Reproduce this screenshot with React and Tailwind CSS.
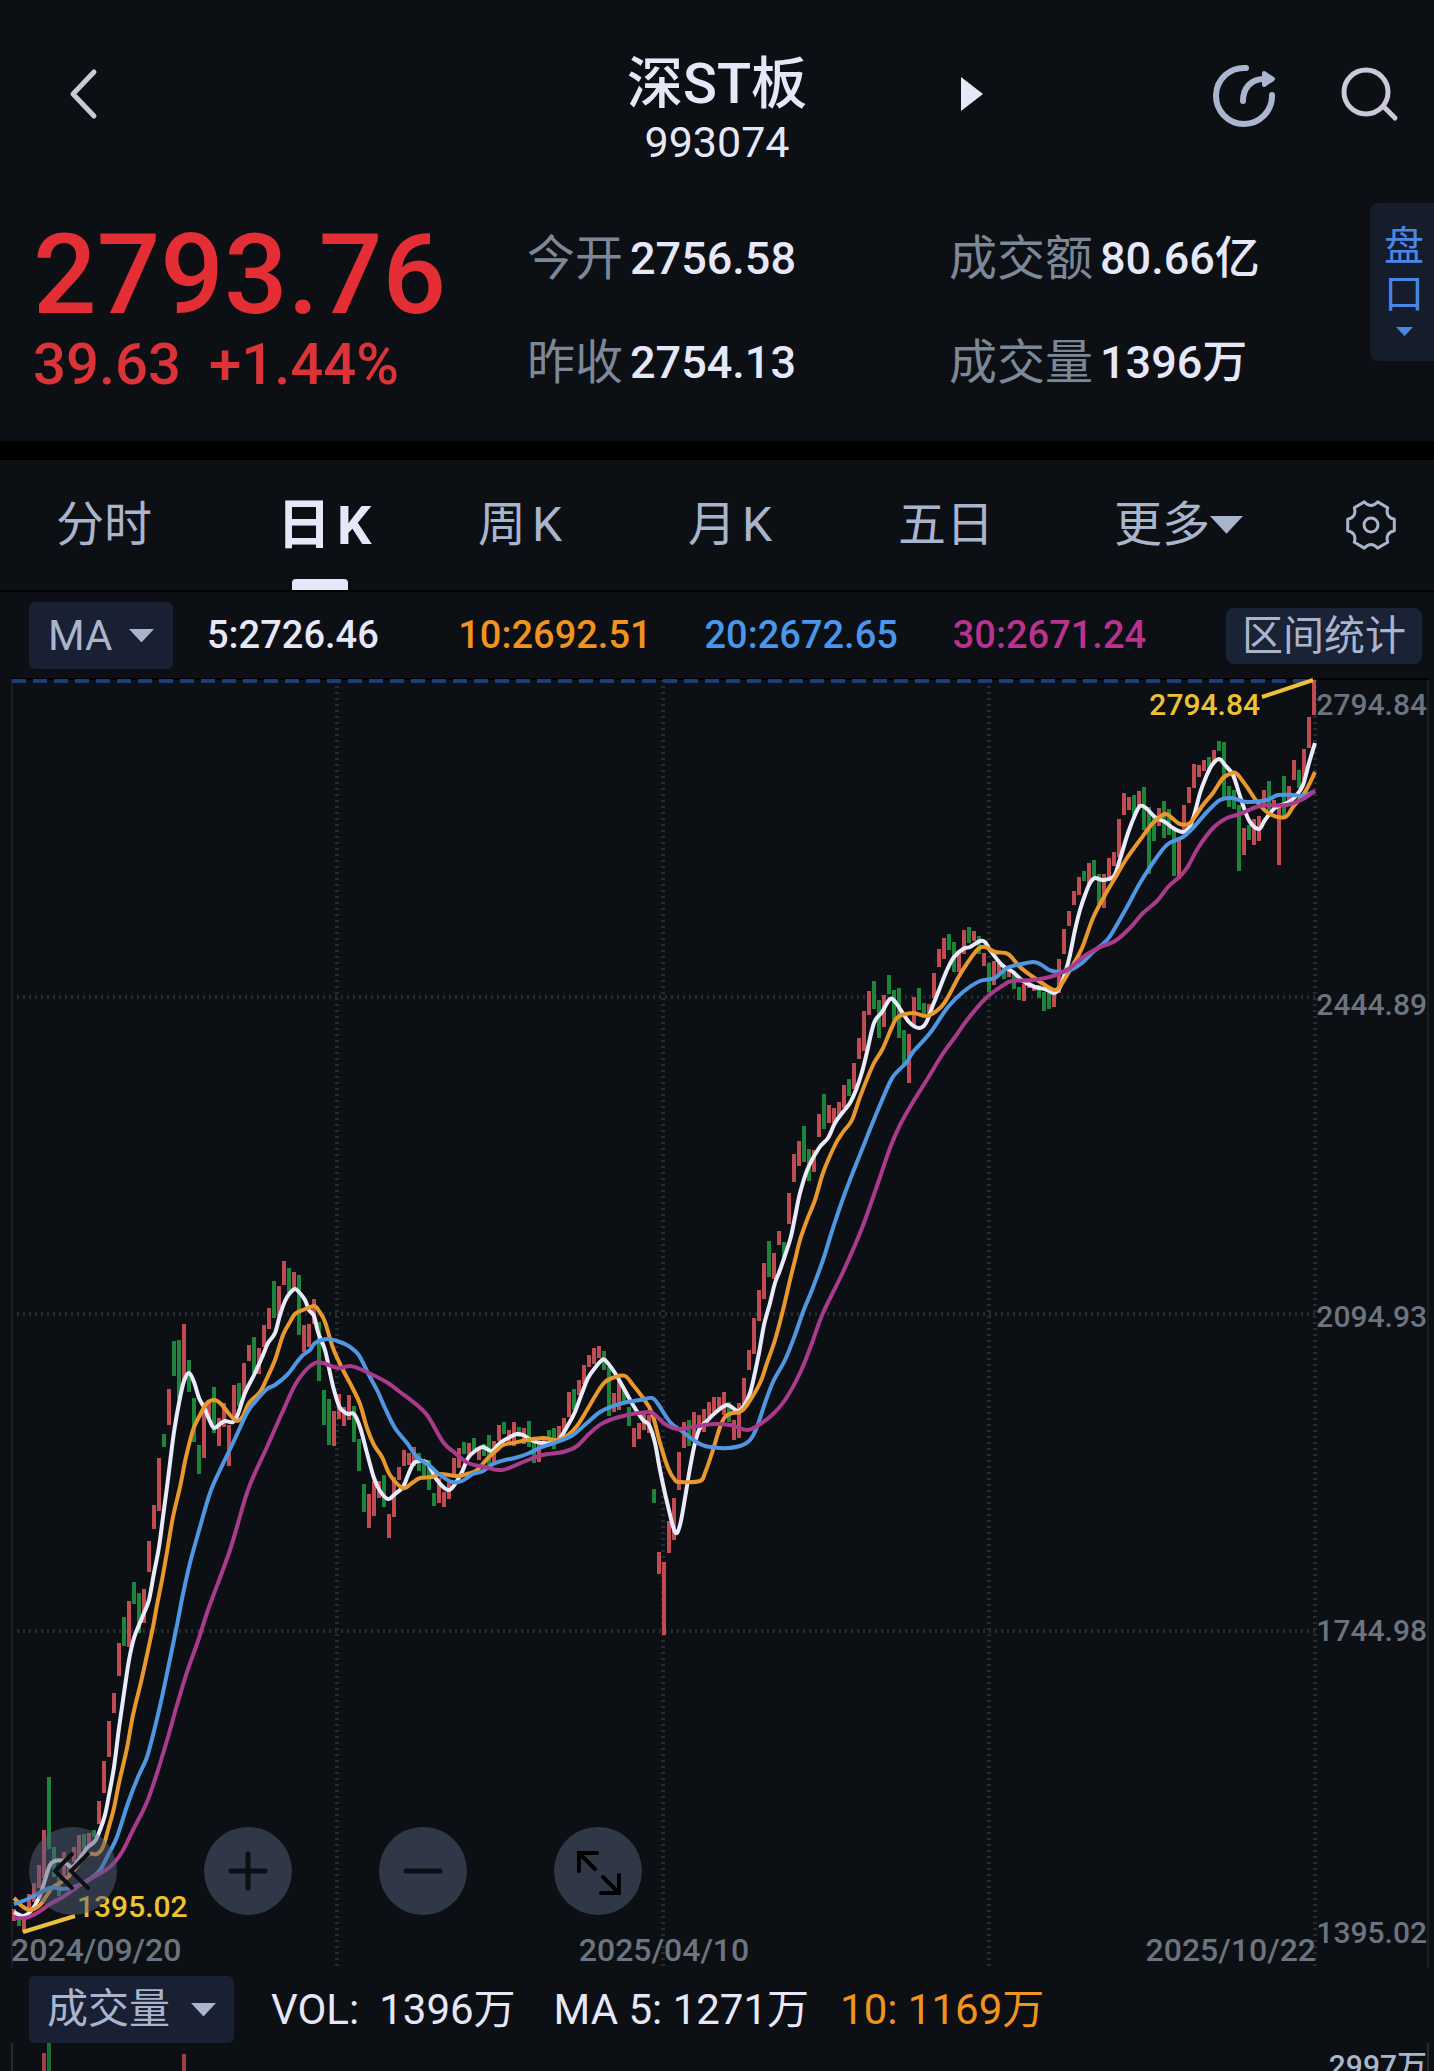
import React, { useState } from 'react';

// One candle per entry: r/g, high and low in chart units
const CANDLES = `
r1909-1921 g1919-1926 r1915-1932 r1894-1908 r1883-1902 r1865-1888 r1830-1878 g1777-1849 g1847-1877 g1877-1896
r1852-1879 r1863-1878 r1847-1862 r1835-1860 g1834-1849 r1833-1846 g1830-1837 r1801-1824 r1761-1793 r1721-1757
r1693-1713 r1643-1676 g1617-1646 r1601-1647 g1582-1604 g1593-1633 r1589-1623 r1541-1572 r1505-1529 r1458-1511
g1434-1447 r1389-1425 g1341-1376 g1340-1399 r1324-1380 g1360-1392 g1398-1442 g1445-1474 r1407-1458 r1400-1420
g1387-1433 r1418-1446 r1403-1427 r1425-1466 r1385-1418 g1383-1406 r1363-1396 r1345-1361 g1337-1373 r1348-1374
r1325-1347 r1308-1329 g1281-1318 r1286-1317 r1261-1285 g1268-1293 r1272-1290 g1275-1335 r1325-1352 r1324-1347
r1299-1324 g1322-1381 g1390-1425 g1399-1445 r1411-1446 r1394-1419 r1407-1426 r1395-1420 g1406-1442 g1439-1471
g1484-1512 r1494-1528 r1481-1516 r1481-1498 g1475-1507 r1514-1538 r1477-1517 r1467-1480 r1450-1466 r1453-1465
r1447-1466 g1453-1471 g1460-1477 g1460-1490 g1493-1506 r1478-1503 r1492-1507 r1480-1499 r1458-1477 r1448-1468
g1442-1454 r1443-1457 g1438-1450 r1447-1460 g1444-1456 g1435-1465 r1441-1462 r1425-1441 g1422-1434 r1430-1443
r1422-1446 g1427-1437 r1428-1444 g1421-1447 g1440-1463 r1442-1462 r1437-1445 g1430-1443 g1428-1449 r1426-1438
r1418-1434 r1392-1417 g1389-1410 r1380-1395 r1365-1384 r1355-1367 r1348-1364 r1346-1358 g1351-1370 g1367-1416
r1393-1412 r1379-1410 g1390-1404 g1407-1426 r1428-1447 r1423-1439 r1412-1430 r1415-1433 g1489-1503 r1552-1574
r1562-1635 r1521-1553 r1498-1540 r1452-1490 r1422-1448 g1420-1446 r1412-1437 r1415-1430 r1409-1432 r1402-1417
r1397-1412 r1397-1411 r1392-1415 g1402-1422 r1420-1440 r1403-1438 r1378-1404 r1350-1370 r1318-1354 r1290-1321
r1263-1299 g1241-1277 r1253-1279 r1231-1245 g1242-1260 r1193-1224 r1154-1182 r1141-1166 g1126-1162 g1149-1181
r1150-1172 r1114-1137 g1094-1129 r1105-1123 r1108-1123 r1102-1117 r1085-1108 g1079-1096 r1063-1089 r1038-1059
r1011-1051 r991-1015 g981-1009 g1000-1038 r995-1027 g975-994 g990-1020 g988-1038 g1030-1064 r1034-1083
r997-1025 g988-1010 g1003-1017 r1004-1017 r973-998 r949-967 r938-959 g934-950 g942-972 r953-972
r930-954 g927-943 r931-941 g936-954 r953-966 g963-992 r961-985 r963-975 g967-979 r968-977
g971-989 g987-1000 r984-1001 r982-988 r985-991 g985-998 g992-1011 g993-1009 r990-1007 r959-993
r929-954 r911-926 r891-905 r877-895 g871-881 r863-885 g860-878 g874-904 r874-908 r858-877
r852-866 r819-857 r793-815 r797-810 g795-818 r791-807 g787-830 g807-874 g817-841 r808-826
g801-838 g809-835 g827-876 r837-879 r805-833 r787-803 r764-788 r765-777 r760-771 g757-772
r750-763 g741-751 g742-800 g786-807 g790-809 g805-871 r828-855 g825-840 r819-845 r816-841
r790-807 g781-810 r800-810 r806-865 g776-815 r786-803 r760-780 g770-788 r749-780 r717-748
r680-715`;

const candles = CANDLES.trim().split(/\s+/).map((item, i) => {
  const [high, low] = item.slice(1).split('-').map(Number);
  return { x: 12 + i * 5, high, low, up: item[0] === 'r' };
});

const MA5 = `14,1912 23,1916 30,1912 39,1898 45,1880 50,1865 55,1861 63,1861 72,1867 80,1858 87,1848 95,1841 100,1830 105,1815
109,1795 114,1767 119,1728 124,1693 129,1660 134,1638 139,1625 144,1613 149,1600 154,1573 159,1547 163,1517 167,1487 170,1463
174,1432 179,1403 184,1381 189,1373 194,1382 199,1398 204,1407 209,1419 214,1428 220,1424 225,1421 233,1422 238,1414 245,1393
254,1375 263,1355 268,1343 275,1333 280,1315 285,1301 290,1293 295,1289 299,1292 305,1300 309,1310 314,1316 318,1332 325,1350
330,1373 334,1390 339,1406 343,1411 348,1414 354,1414 360,1427 367,1453 374,1478 380,1491 388,1499 395,1494 403,1487 408,1475
414,1463 422,1461 428,1464 437,1480 448,1490 455,1484 462,1472 468,1458 475,1451 483,1447 492,1451 500,1443 510,1437 517,1434
523,1435 533,1441 542,1443 552,1443 560,1438 568,1425 575,1412 582,1393 588,1378 595,1368 601,1361 605,1360 615,1373 623,1387
633,1405 643,1420 649,1425 655,1443 660,1470 667,1502 675,1532 680,1525 685,1498 690,1468 695,1443 700,1428 707,1421 715,1413
727,1405 738,1411 745,1404 750,1393 754,1377 759,1353 764,1325 770,1303 775,1283 780,1270 790,1240 795,1217 800,1193 808,1168
819,1148 828,1138 835,1123 843,1112 850,1103 856,1090 862,1072 867,1052 874,1023 882,1012 890,999 896,1003 909,1022 919,1028
926,1023 933,1005 939,990 947,970 954,957 963,949 970,947 980,941 985,942 990,950 1002,965 1013,972 1023,981 1035,987
1045,989 1054,993 1060,987 1066,970 1070,955 1075,930 1080,910 1085,895 1090,883 1095,878 1103,880 1114,876 1120,859 1128,833
1135,815 1140,806 1146,808 1155,817 1165,822 1173,828 1183,832 1190,826 1195,812 1200,793 1206,777 1212,765 1219,759 1225,765
1233,775 1239,793 1244,808 1250,822 1259,829 1265,820 1275,808 1287,803 1295,797 1303,785 1309,763 1315,743`;

const MA10 = `14,1898 22,1906 30,1910 40,1905 47,1895 53,1887 63,1881 72,1873 82,1860 90,1854 97,1854 103,1847 108,1830 114,1808
119,1783 127,1748 133,1715 141,1682 147,1655 153,1627 157,1605 162,1580 167,1552 173,1517 180,1487 186,1457 193,1430 200,1415
207,1403 215,1400 222,1405 230,1415 237,1421 243,1416 249,1403 260,1392 267,1378 275,1360 283,1335 290,1322 295,1314 303,1310
314,1306 319,1311 325,1322 333,1348 343,1370 352,1387 360,1404 367,1428 374,1445 382,1457 390,1475 403,1488 412,1483 420,1478
432,1477 440,1474 457,1476 467,1474 477,1470 488,1458 497,1450 503,1445 513,1443 527,1440 543,1438 557,1440 567,1436 577,1426
587,1410 597,1393 605,1382 615,1377 625,1376 633,1385 643,1398 652,1413 660,1443 668,1468 675,1480 680,1482 700,1481 705,1473
712,1453 720,1427 725,1417 732,1413 740,1412 747,1405 760,1383 767,1363 775,1340 783,1310 790,1280 795,1260 800,1240 807,1220
815,1200 823,1173 835,1145 843,1132 852,1120 860,1097 873,1065 882,1050 892,1027 898,1017 913,1013 927,1016 940,1008 948,997
958,978 968,962 978,949 985,947 995,952 1008,954 1020,967 1033,977 1045,985 1055,990 1061,985 1070,970 1082,948 1093,918
1105,895 1115,878 1127,858 1140,840 1153,823 1165,814 1172,818 1180,824 1190,823 1203,805 1213,793 1223,778 1232,773 1237,774
1247,787 1258,803 1270,814 1285,817 1293,807 1305,792 1315,772`;

const MA20 = `14,1904 28,1899 50,1888 63,1889 77,1886 90,1879 100,1870 108,1855 117,1837 128,1803 138,1777 147,1757 155,1727
162,1697 170,1659 177,1625 183,1594 190,1563 200,1527 210,1493 220,1470 233,1443 247,1413 255,1402 267,1389 275,1385 287,1375
297,1362 303,1355 310,1350 315,1343 327,1339 337,1341 347,1345 355,1351 360,1357 370,1377 378,1392 385,1408 395,1428 407,1443
417,1457 430,1466 440,1475 452,1482 462,1481 473,1474 483,1471 493,1464 505,1460 515,1458 527,1454 542,1447 560,1441 573,1435
587,1423 600,1412 613,1406 627,1402 640,1400 652,1398 658,1404 670,1422 683,1432 695,1441 705,1446 720,1448 728,1448 740,1446
750,1440 757,1427 765,1403 773,1382 785,1360 795,1335 803,1312 812,1290 823,1260 833,1228 845,1193 863,1147 875,1117 890,1082
897,1072 907,1062 913,1052 930,1033 948,1007 963,992 980,981 995,978 1007,968 1022,964 1033,962 1040,964 1052,971 1068,971
1082,963 1093,952 1107,940 1115,928 1127,907 1140,883 1157,857 1168,844 1183,837 1192,829 1207,812 1220,800 1232,798 1247,802
1267,800 1278,795 1293,795 1303,796 1315,791`;

const MA30 = `14,1918 25,1918 37,1913 50,1904 63,1897 80,1885 97,1875 110,1867 122,1852 133,1830 147,1802 158,1770 168,1737
177,1705 187,1672 198,1641 208,1610 230,1550 248,1490 267,1447 282,1413 295,1385 305,1371 315,1363 323,1363 338,1368 350,1366
360,1369 377,1377 388,1383 400,1392 412,1401 427,1415 443,1442 455,1453 468,1463 485,1467 502,1470 523,1462 542,1455 563,1452
577,1446 590,1433 603,1423 623,1416 648,1412 655,1415 665,1424 677,1429 693,1427 713,1424 730,1425 747,1430 757,1426 772,1415
785,1400 800,1373 812,1343 823,1313 843,1272 862,1228 878,1183 890,1148 900,1125 913,1102 928,1078 942,1055 955,1037 967,1020
985,999 1002,986 1012,981 1033,980 1053,976 1070,968 1083,957 1098,948 1115,941 1130,928 1143,913 1157,901 1168,887 1178,878
1187,868 1198,848 1213,828 1227,818 1240,814 1260,806 1287,805 1303,799 1315,791`;

// Catmull-Rom through the points
function toPath(data) {
  const pts = data.trim().split(/\s+/).map((p) => p.split(',').map(Number));
  let d = `M${pts[0][0]} ${pts[0][1]}`;
  for (let i = 0; i < pts.length - 1; i++) {
    const p0 = pts[i - 1] || pts[i];
    const p1 = pts[i];
    const p2 = pts[i + 1];
    const p3 = pts[i + 2] || p2;
    const c = [
      p1[0] + (p2[0] - p0[0]) / 6,
      p1[1] + (p2[1] - p0[1]) / 6,
      p2[0] - (p3[0] - p1[0]) / 6,
      p2[1] - (p3[1] - p1[1]) / 6,
    ].map((n) => n.toFixed(1));
    d += `C${c[0]} ${c[1]} ${c[2]} ${c[3]} ${p2[0]} ${p2[1]}`;
  }
  return d;
}

const maLines = [
  { key: 'ma5', color: '#e9ebfa', d: toPath(MA5) },
  { key: 'ma10', color: '#e8982c', d: toPath(MA10) },
  { key: 'ma20', color: '#4f97e2', d: toPath(MA20) },
  { key: 'ma30', color: '#aa3a8b', d: toPath(MA30) },
];

const maLegend = [
  { label: '5:2726.46', className: 'text-[#e6e8fa]' },
  { label: '10:2692.51', className: 'text-[#f0931f]' },
  { label: '20:2672.65', className: 'text-[#4a96ea]' },
  { label: '30:2671.24', className: 'text-[#b8328e]' },
];

const priceLabels = [
  { y: 715, text: '2794.84' },
  { y: 1015, text: '2444.89' },
  { y: 1327, text: '2094.93' },
  { y: 1641, text: '1744.98' },
  { y: 1943, text: '1395.02' },
];

const Caret = ({ className = '' }) => (
  <svg viewBox="0 0 26 14" className={className} fill="currentColor" aria-hidden="true">
    <path d="M0 0h26L13 14z" />
  </svg>
);

const Header = () => (
  <header className="grid grid-cols-[1fr_auto_1fr] pt-[52px] text-[#e6e8fa]">
    <div className="pl-[68px] pt-[16px]">
      <button aria-label="返回" className="block">
        <svg viewBox="0 0 30 52" className="h-[52px] w-[30px]" fill="none" stroke="#c9cad6" strokeWidth="5" strokeLinecap="round" strokeLinejoin="round">
          <path d="M26 4 5 26l21 22" />
        </svg>
      </button>
    </div>
    <div className="text-center">
      <h1 className="text-[56px] font-medium leading-[64px]">深ST板</h1>
      <p className="text-[43px] leading-[52px]">993074</p>
    </div>
    <div className="flex items-start justify-between pl-[154px] pr-[34px]">
      <button aria-label="下一个" className="mt-[25px]">
        <svg viewBox="0 0 22 34" className="h-[34px] w-[22px]" fill="currentColor">
          <path d="M0 0 22 17 0 34z" />
        </svg>
      </button>
      <div className="flex gap-[62px]">
        <button aria-label="分享" className="mt-[10px]">
          <svg viewBox="0 0 66 66" className="h-[66px] w-[66px]" fill="none" stroke="#a9b6cd" strokeWidth="6" strokeLinecap="round">
            <path d="M34 6A28 28 0 1 0 60 33" />
            <path d="M31 39C31 26 39 17 52 17" />
            <path d="M52 11 61 17 52 23z" fill="#a9b6cd" strokeWidth="4" strokeLinejoin="round" />
          </svg>
        </button>
        <button aria-label="搜索" className="mt-[12px]">
          <svg viewBox="0 0 60 60" className="h-[60px] w-[60px]" fill="none" stroke="#cac8d9" strokeWidth="5" strokeLinecap="round">
            <circle cx="26" cy="26" r="22" />
            <path d="m44 41 11 11" />
          </svg>
        </button>
      </div>
    </div>
  </header>
);

const Stat = ({ label, value }) => (
  <div className="flex items-center gap-[7px] whitespace-nowrap leading-[56px]">
    <dt className="text-[48px] text-[#7c8797]">{label}</dt>
    <dd className="text-[45px] font-medium text-[#e6e8fa]">{value}</dd>
  </div>
);

const Quote = () => (
  <section className="flex pt-[35px]">
    <div className="grid flex-1 grid-cols-[494fr_422fr_421fr] pb-[47px] pl-[33px] pt-[13px]">
      <div className="whitespace-nowrap text-[#e22e34]">
        <p className="text-[112px] font-medium leading-[118px]">2793.76</p>
        <p className="flex gap-[28px] text-[58px] font-medium leading-[60px] text-[#dc3338]">
          <span>39.63</span>
          <span>+1.44%</span>
        </p>
      </div>
      <dl className="flex flex-col gap-[48px] pt-[15px]">
        <Stat label="今开" value="2756.58" />
        <Stat label="昨收" value="2754.13" />
      </dl>
      <dl className="flex flex-col gap-[48px] pt-[15px]">
        <Stat label="成交额" value="80.66亿" />
        <Stat label="成交量" value="1396万" />
      </dl>
    </div>
    <button className="flex h-[158px] w-[64px] flex-col items-center rounded-l-lg bg-[#151c2c] pl-1 pt-[20px] text-[40px] leading-[48px] text-[#4a86e8]">
      <span>盘</span>
      <span>口</span>
      <Caret className="mt-[8px] w-[17px]" />
    </button>
  </section>
);

const GearIcon = () => (
  <svg viewBox="0 0 52 52" className="h-[52px] w-[52px]" fill="none" stroke="currentColor" strokeWidth="3" strokeLinejoin="round">
    <path d="M49.3 31.8Q40 34 42.7 43.3L32.6 49.1Q26 42 19.4 49.1L9.3 43.3Q12 34 2.7 31.8V20.2Q12 18 9.3 8.7L19.4 2.9Q26 10 32.6 2.9L42.7 8.7Q40 18 49.3 20.2Z" />
    <circle cx="26" cy="26" r="7" />
  </svg>
);

const tabs = [
  { name: '分时' },
  { name: '日', suffix: 'K' },
  { name: '周', suffix: 'K' },
  { name: '月', suffix: 'K' },
  { name: '五日' },
  { name: '更多', menu: true },
];

const Tabs = () => {
  const [active, setActive] = useState('日');

  return (
    <nav className="grid h-[132px] grid-cols-[221fr_201fr_210fr_210fr_216fr_231fr_52fr] justify-items-start border-b-2 border-black pl-[56px] pr-[37px] text-[48px] text-[#a9b5cc]">
      {tabs.map((tab) => (
        <button
          key={tab.name}
          onClick={() => setActive(tab.name)}
          className={`relative flex items-center whitespace-nowrap ${active === tab.name ? 'text-[54px] font-bold text-[#e6e8fa]' : ''}`}
        >
          {tab.name}
          {tab.suffix && <span className="ml-[6px]">{tab.suffix}</span>}
          {tab.menu && <Caret className="w-[33px]" />}
          {active === tab.name && <span className="absolute bottom-0 left-[15px] h-[11px] w-[56px] rounded-t-sm bg-[#e6e8fa]" />}
        </button>
      ))}
      <button aria-label="设置">
        <GearIcon />
      </button>
    </nav>
  );
};

const Indicators = () => (
  <div className="flex items-center pb-[7px] pl-[29px] pr-[12px] pt-[10px]">
    <button className="flex h-[67px] w-[144px] items-center justify-between rounded-md bg-[#1a2033] px-[19px] text-[42px] text-[#a9b5cc]">
      MA
      <Caret className="w-[25px]" />
    </button>
    <ul className="grid flex-1 grid-cols-[251fr_246fr_248fr_273fr] pl-[34px] text-[38px] font-medium">
      {maLegend.map((ma) => (
        <li key={ma.label} className={ma.className}>{ma.label}</li>
      ))}
    </ul>
    <button className="h-[56px] w-[196px] rounded-lg bg-[#1a2336] text-[41px] leading-[56px] text-[#a9b5cc]">
      区间统计
    </button>
  </div>
);

const roundButton = 'flex h-[88px] w-[88px] items-center justify-center rounded-full bg-[#53607b]/50';

const Chart = () => (
  <section className="relative">
    <svg viewBox="0 676 1434 1296" className="block w-full" fill="none">
      <path d="M12 679H1429" stroke="#000" strokeWidth="2" />
      <path d="M12 680V1968M1428 680V1968" stroke="#1a1d22" strokeWidth="2" />
      <g stroke="#272a2f" strokeWidth="4" strokeDasharray="2 4">
        <path d="M17 997H1315M17 1314H1315M17 1631H1315" />
        <path d="M337 680V1967M663 680V1967M989 680V1967M1315 680V1967" />
      </g>
      <path d="M12 681H1315" stroke="#1e3c78" strokeWidth="4" strokeDasharray="14 7" />
      {candles.map((c) => (
        <rect key={c.x} x={c.x} y={c.high} width="4" height={c.low - c.high} fill={c.up ? '#c04b50' : '#1d853a'} />
      ))}
      {maLines.map((line) => (
        <path key={line.key} d={line.d} stroke={line.color} strokeWidth="4" strokeLinejoin="round" />
      ))}
      <path d="M23 1932 75 1916M1262 697 1313 680" stroke="#ebc03a" strokeWidth="4" />
      <g fontSize="30" fontWeight="500" fill="#edc233">
        <text x="77" y="1917">1395.02</text>
        <text x="1260" y="715" textAnchor="end">2794.84</text>
      </g>
      <g fontSize="30" fontWeight="500" fill="#6c7480">
        {priceLabels.map((p) => (
          <text key={p.text} x="1427" y={p.y} textAnchor="end">{p.text}</text>
        ))}
      </g>
      <g fontSize="32" fontWeight="500" fill="#6c7480">
        <text x="11" y="1961">2024/09/20</text>
        <text x="664" y="1961" textAnchor="middle">2025/04/10</text>
        <text x="1316" y="1961" textAnchor="end">2025/10/22</text>
      </g>
    </svg>
    <div className="absolute bottom-[57px] left-[29px] flex gap-[87px] text-[#0c0f13]">
      <button aria-label="左移" className={roundButton}>
        <svg viewBox="0 0 88 88" className="h-full w-full" fill="none" stroke="currentColor" strokeWidth="4" strokeLinecap="round">
          <path d="M43 27 26 44 43 61M59 27 42 44 59 61" />
        </svg>
      </button>
      <button aria-label="放大" className={roundButton}>
        <svg viewBox="0 0 88 88" className="h-full w-full" fill="none" stroke="currentColor" strokeWidth="5" strokeLinecap="round">
          <path d="M27 44H61M44 27V61" />
        </svg>
      </button>
      <button aria-label="缩小" className={roundButton}>
        <svg viewBox="0 0 88 88" className="h-full w-full" fill="none" stroke="currentColor" strokeWidth="5" strokeLinecap="round">
          <path d="M27 44H61" />
        </svg>
      </button>
      <button aria-label="全屏" className={roundButton}>
        <svg viewBox="0 0 88 88" className="h-full w-full" fill="none" stroke="#000" strokeWidth="4" strokeLinecap="round">
          <path d="M43 26H25V44M25 26 41 42" />
          <path d="M47 66H65V48M65 66 49 50" />
        </svg>
      </button>
    </div>
  </section>
);

const Volume = () => (
  <section>
    <div className="flex items-center whitespace-nowrap pl-[29px] pt-[4px] text-[42px] text-[#e6e8fa]">
      <button className="flex h-[67px] w-[205px] items-center justify-between rounded-md bg-[#1a2033] px-[18px] text-[41px] text-[#a9b5cc]">
        成交量
        <Caret className="w-[25px]" />
      </button>
      <p className="flex gap-[20px] pl-[37px]">
        <span>VOL:</span>
        <span>1396万</span>
      </p>
      <span className="pl-[38px]">MA 5: 1271万</span>
      <span className="pl-[31px] text-[#f0931f]">10: 1169万</span>
    </div>
    <svg viewBox="0 2043 1434 28" className="block w-full">
      <path d="M12 2040V2071M1428 2040V2071" stroke="#272a2f" strokeWidth="2" />
      <path d="M44 2053V2071M184 2054V2071" stroke="#9c4146" strokeWidth="4" />
      <path d="M49 2043V2071" stroke="#1a7034" strokeWidth="4" />
      <text x="1427" y="2076" textAnchor="end" fontSize="30" fontWeight="500" fill="#a9b5cc">2997万</text>
    </svg>
  </section>
);

export default function App() {
  return (
    <main className="min-h-screen overflow-hidden bg-[#0c0f13] font-['Roboto','Noto_Sans_CJK_SC',sans-serif]">
      <Header />
      <Quote />
      <div className="h-[19px] bg-black" />
      <Tabs />
      <Indicators />
      <Chart />
      <Volume />
    </main>
  );
}
